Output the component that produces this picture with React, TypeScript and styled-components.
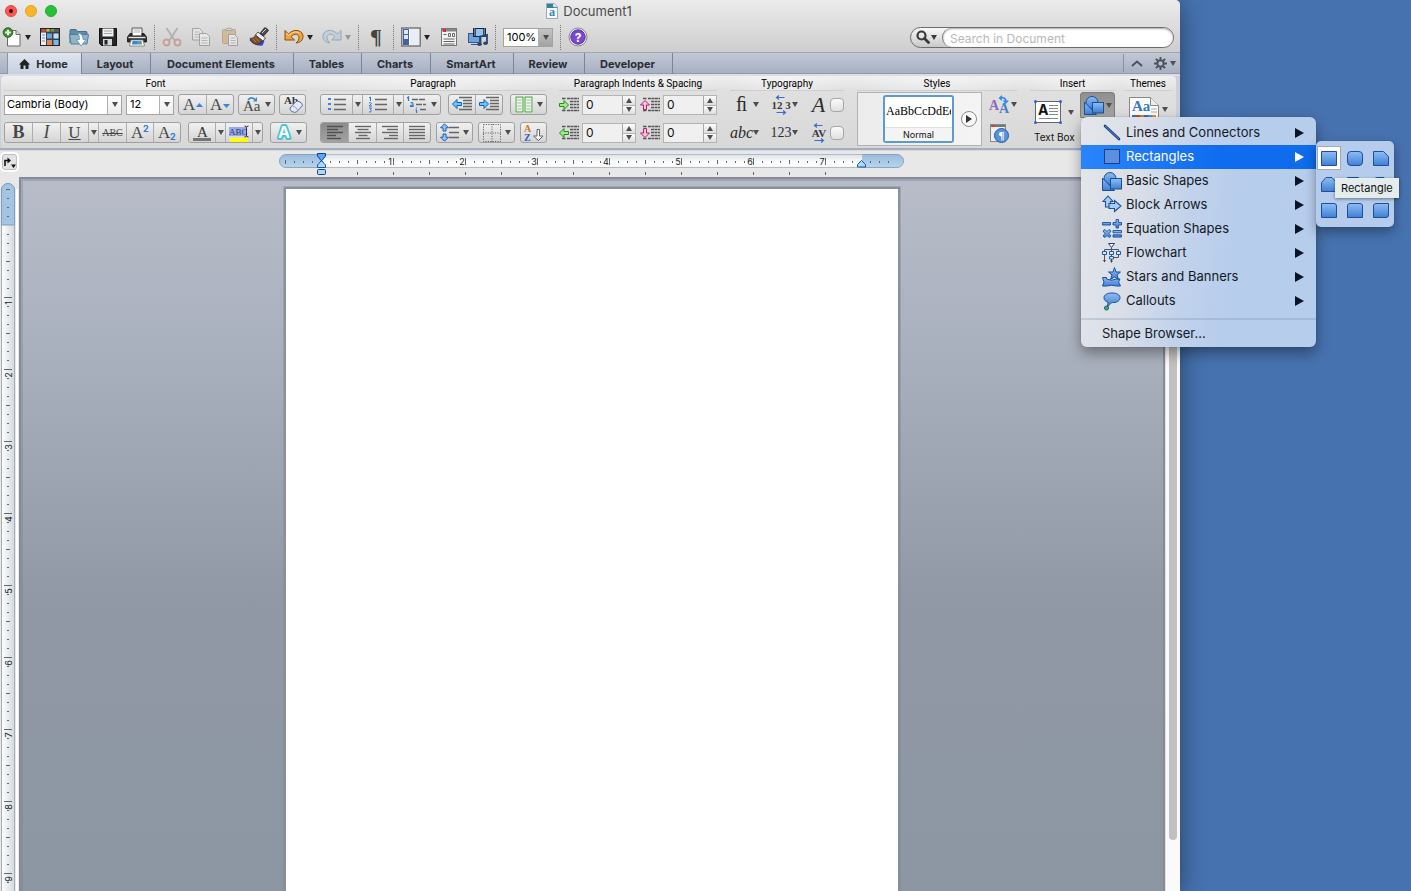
import React from "react";
import styled, { createGlobalStyle, css } from "styled-components";

const ui = `Inter, "Liberation Sans", sans-serif`;
const serif = `"Liberation Serif", serif`;

const GlobalStyle = createGlobalStyle`
  *, *::before, *::after { box-sizing: border-box; }
  body { margin: 0; background: #4672af; font-family: ${ui}; color: #111; overflow: hidden; }
  button, input, select { font: inherit; color: inherit; margin: 0; }
  button { padding: 0; border: 0; background: none; }
  svg { display: block; flex: none; }
`;

/* ---------- window frame ---------- */

const Desktop = styled.div`
  height: 100vh;
  padding-right: 231px;
`;
const Window = styled.main`
  height: 100%;
  display: flex;
  flex-direction: column;
  background: #e8e8e8;
  box-shadow: 0 4px 24px rgba(0, 0, 0, 0.45);
  border-radius: 0 5px 0 0;
`;
const Chrome = styled.header`
  background: linear-gradient(#ebebeb, #cecece);
  border-radius: 0 5px 0 0;
  border-bottom: 1px solid #a2a6ae;
`;
const TitleBar = styled.div`
  height: 22px;
  display: grid;
  grid-template-columns: 1fr auto 1fr;
  align-items: center;
`;
const Lights = styled.div`
  display: flex;
  gap: 8px;
  padding-left: 5px;
`;
const Light = styled.button<{ $c: string; $b: string }>`
  width: 12px;
  height: 12px;
  border-radius: 50%;
  background: ${(p) => p.$c};
  border: 1px solid ${(p) => p.$b};
  display: grid;
  place-items: center;
`;
const LightDot = styled.i`
  width: 4px;
  height: 4px;
  border-radius: 50%;
  background: #4d0000;
`;
const DocTitle = styled.h1`
  margin: 0 2px 0 0;
  display: flex;
  align-items: center;
  gap: 5px;
  font-size: 13px;
  line-height: 22px;
  font-weight: 400;
  color: #4b4b4b;
`;

/* ---------- standard toolbar ---------- */

const Toolbar = styled.div`
  height: 30px;
  display: flex;
  align-items: center;
  padding: 0 6px 0 2px;
`;
const ToolGroup = styled.div`
  display: flex;
  align-items: center;
  gap: 9px;
`;
const Split = styled.div`
  display: flex;
  align-items: center;
`;
const ToolButton = styled.button<{ $dim?: boolean }>`
  width: 20px;
  height: 22px;
  display: grid;
  place-items: center;
  opacity: ${(p) => (p.$dim ? 0.4 : 1)};
`;
const CaretButton = styled.button<{ $dim?: boolean }>`
  width: 9px;
  height: 22px;
  display: grid;
  place-items: center end;
  opacity: ${(p) => (p.$dim ? 0.35 : 1)};
`;
const ToolSep = styled.i`
  height: 25px;
  border-left: 1px dotted #777;
  margin: 0 7px;
`;
const Pilcrow = styled.span`
  font: 700 22px/20px ${serif};
  color: #444;
`;
const SearchBox = styled.div`
  margin-left: auto;
  width: 264px;
  height: 21px;
  display: flex;
  border: 1px solid #6d6d6d;
  border-radius: 11px;
  background: linear-gradient(#f8f8f8, #c9c9c9);
`;
const SearchMode = styled.button`
  width: 31px;
  display: flex;
  align-items: center;
  justify-content: center;
  gap: 1px;
`;
const SearchInput = styled.input`
  flex: 1;
  min-width: 0;
  border: 0;
  border-left: 1px solid #777;
  border-radius: 10px;
  padding: 2px 7px 0;
  background: #fff;
  box-shadow: inset 0 1px 2px rgba(0, 0, 0, 0.35);
  font-size: 12px;
  &::placeholder { color: #b9b9b9; opacity: 1; }
`;

/* ---------- ribbon tabs ---------- */

const TabBar = styled.nav`
  height: 23px;
  flex: none;
  display: flex;
  align-items: stretch;
  padding-left: 7px;
  background: linear-gradient(#c3c8d4, #a9b1c2 19px, #a9b1c2 20px, #8f99ab 20px, #8f99ab 21px, #d9dfe9 21px);
`;
const Tab = styled.button<{ $w: number; $on?: boolean }>`
  width: ${(p) => p.$w}px;
  height: 21px;
  display: flex;
  align-items: center;
  justify-content: center;
  gap: 6px;
  padding-right: 2px;
  font-size: 11px;
  font-weight: 700;
  color: #2a2d33;
  border-right: 1px solid #7d8594;
  ${(p) =>
    p.$on &&
    css`
      background: linear-gradient(#dfe4ee, #c8d0df);
      border-left: 1px solid #8d94a2;
    `}
`;
const TabTools = styled.div`
  margin-left: auto;
  height: 18px;
  margin-top: 1px;
  display: flex;
  align-items: center;
  border-left: 1px solid #8a91a0;
  padding: 0 4px 0 7px;
  button { display: flex; align-items: center; }
  button + button { margin-left: 11px; gap: 3px; }
`;

/* ---------- ribbon ---------- */

const RibbonShell = styled.div`
  flex: none;
  background: #c9d0dc;
  border-bottom: 2px solid #a4aebd;
  box-shadow: 0 1px 0 #d5dae2;
`;
const Ribbon = styled.section`
  height: 72px;
  margin: 0 4px 0 1px;
  display: flex;
  padding-top: 1px;
  background: linear-gradient(#f0f0f0, #e0e0e0 14px, #d8d8d8);
  border-radius: 4px;
`;
const Group = styled.section<{ $w?: number; $start?: number; $end?: number }>`
  ${(p) => (p.$w ? `width: ${p.$w}px; flex: none;` : "flex: 1; min-width: 0;")}
  display: flex;
  flex-direction: column;
  padding: 0 ${(p) => p.$end ?? 8}px 0 ${(p) => p.$start ?? 5}px;
  & + & { position: relative; }
  & + &::before {
    content: "";
    position: absolute;
    left: 0;
    top: 4px;
    bottom: 5px;
    border-left: 1px dotted #7c7c7c;
  }
`;
const GroupTitle = styled.h2`
  margin: 0 0 3px;
  height: 14px;
  font-family: Roboto, ${ui};
  font-size: 10px;
  line-height: 14px;
  font-weight: 400;
  text-align: center;
  color: #000;
  border-bottom: 1px solid #cfcfcf;
  background: linear-gradient(90deg, transparent, rgba(255, 255, 255, 0.35), transparent);
  white-space: nowrap;
`;
const Row = styled.div<{ $gap?: number }>`
  height: 21px;
  display: flex;
  align-items: center;
  gap: ${(p) => p.$gap ?? 4}px;
  & + & { margin-top: 7px; }
`;
const Segment = styled.div`
  display: flex;
  height: 21px;
  border: 1px solid #a0a0a0;
  border-radius: 3px;
  background: linear-gradient(#f1f1f1, #d4d4d4);
`;
const SegButton = styled.button<{ $w: number; $on?: boolean }>`
  width: ${(p) => p.$w}px;
  display: flex;
  align-items: center;
  justify-content: center;
  gap: 4px;
  & + & { border-left: 1px solid #adadad; }
  ${(p) => p.$on && "background: linear-gradient(#8b8b8b, #a2a2a2); border-radius: 2px 0 0 2px;"}
`;
const Glyph = styled.span<{ $i?: boolean; $u?: boolean; $s?: number; $strike?: boolean; $b?: boolean }>`
  font-family: ${serif};
  font-size: ${(p) => p.$s ?? 18}px;
  line-height: 19px;
  font-weight: ${(p) => (p.$b ? 700 : 400)};
  font-style: ${(p) => (p.$i ? "italic" : "normal")};
  text-decoration: ${(p) => (p.$u ? "underline" : p.$strike ? "line-through" : "none")};
  color: #484848;
`;
const Combo = styled.div<{ $w: number; $grey?: boolean }>`
  width: ${(p) => p.$w}px;
  height: ${(p) => (p.$grey ? 19 : 20)}px;
  display: grid;
  border: 1px solid #a3a3a3;
  background: #fff;
  > * { grid-area: 1 / 1; }
`;
const ComboSelect = styled.select<{ $pad: number }>`
  appearance: none;
  width: 100%;
  border: 0;
  background: transparent;
  padding: 0 0 1px ${(p) => p.$pad}px;
  font-size: 11px;
  color: #000;
`;
const ComboArrow = styled.i<{ $grey?: boolean }>`
  justify-self: end;
  width: 14px;
  display: grid;
  place-items: center;
  pointer-events: none;
  border-left: 1px solid #b0b0b0;
  background: ${(p) => (p.$grey ? "linear-gradient(#c4c4c4, #a2a2a2)" : "linear-gradient(#fff, #ececec)")};
`;
const Field = styled.div`
  display: flex;
  align-items: center;
  gap: 2px;
`;
const Spinner = styled.div`
  width: 54px;
  height: 20px;
  display: grid;
  grid-template: 1fr 1fr / 1fr 13px;
  border: 1px solid #b4b4b4;
  background: #f0f0f0;
  input {
    grid-row: 1 / 3;
    width: 100%;
    min-width: 0;
    border: 0;
    background: transparent;
    padding: 0 3px 1px;
    font-size: 12px;
  }
  button {
    display: grid;
    place-items: center;
    border-left: 1px solid #a8a8a8;
    background: linear-gradient(#fdfdfd, #dedede);
  }
  button + button { border-top: 1px solid #b4b4b4; }
`;
const TypoRow = styled.div`
  height: 21px;
  display: grid;
  grid-template-columns: 23px 17px 22px 16px 21px 15px;
  align-items: center;
  justify-items: center;
  > svg { justify-self: start; }
  & + & { margin-top: 7px; }
`;
const TypoButton = styled.button<{ $s: number; $i?: boolean }>`
  font: ${(p) => (p.$i ? "italic" : "normal")} ${(p) => p.$s}px/19px ${serif};
  color: #2c2c2c;
`;
const Check = styled.input`
  appearance: none;
  width: 14px;
  height: 14px;
  border: 1px solid #a6a6a6;
  border-radius: 4px;
  background: linear-gradient(#fafafa, #e0e0e0);
`;
const StyleArea = styled.div`
  display: flex;
  gap: 7px;
`;
const Gallery = styled.div`
  width: 125px;
  height: 54px;
  margin-top: -2px;
  display: flex;
  align-items: center;
  justify-content: flex-end;
  gap: 7px;
  padding-right: 4px;
  border: 1px solid #b2b2b2;
  background: linear-gradient(90deg, #ececec, #f4f4f4);
`;
const StyleCard = styled.button`
  width: 71px;
  height: 48px;
  display: flex;
  flex-direction: column;
  border: 2px solid #5b9bd0;
  border-radius: 3px;
  background: #fff;
`;
const Sample = styled.span`
  width: 66px;
  height: 30px;
  padding-left: 1px;
  overflow: hidden;
  font: 12px/29px ${serif};
  white-space: nowrap;
  color: #000;
`;
const SampleName = styled.span`
  width: 100%;
  height: 14px;
  border-top: 1px solid #e2e2e2;
  background: #f4f4f4;
  font-size: 9px;
  line-height: 13px;
`;
const RoundButton = styled.button`
  width: 16px;
  height: 16px;
  border: 1px solid #8a8a8a;
  border-radius: 50%;
  background: #fafafa;
  display: grid;
  place-items: center;
`;
const StyleTools = styled.div`
  display: flex;
  flex-direction: column;
  gap: 7px;
  button { height: 21px; display: flex; align-items: center; }
`;
const InsertArea = styled.div`
  display: flex;
  justify-content: space-between;
  margin-top: -2px;
  padding-left: 4px;
`;
const BigButton = styled.button`
  display: flex;
  flex-direction: column;
  font-size: 10px;
  line-height: 14px;
  white-space: nowrap;
  text-align: left;
`;
const BigIcon = styled.span`
  display: flex;
  align-items: center;
  gap: 6px;
  padding: 8px 0 6px;
`;
const ShapesAnchor = styled.div`
  position: relative;
  z-index: 5;
`;
const ShapesButton = styled.button`
  width: 35px;
  height: 26px;
  display: flex;
  align-items: center;
  justify-content: center;
  gap: 2px;
  border: 1px solid #7d7d7d;
  border-radius: 3px 3px 0 0;
  background: linear-gradient(#8f8f8f, #a6a6a6);
`;
const ThemeButton = styled.button`
  display: flex;
  align-items: center;
  gap: 3px;
  padding: 3px 0 0 5px;
`;

/* ---------- menu ---------- */

const Menu = styled.ul`
  position: absolute;
  top: 25px;
  left: 1px;
  width: 235px;
  margin: 0;
  padding: 4px 0 1px;
  list-style: none;
  border-radius: 6px;
  background: linear-gradient(97deg, #e4e6ea 0%, #d9dee8 25%, #c1d2ec 46%, #b7cdec 65%, #b7cdec);
  box-shadow: 0 0 1px rgba(0, 0, 0, 0.4), 0 6px 14px rgba(0, 0, 0, 0.38);
`;
const MenuItem = styled.li<{ $rule?: boolean }>`
  position: relative;
  ${(p) => p.$rule && "margin-top: 5px; padding-top: 2px; border-top: 2px solid rgba(120, 140, 170, 0.28);"}
`;
const MenuButton = styled.button<{ $on?: boolean }>`
  width: 100%;
  height: 24px;
  display: flex;
  align-items: center;
  gap: 4px;
  padding: 0 12px 0 21px;
  font-size: 13px;
  color: ${(p) => (p.$on ? "#fff" : "#141a26")};
  background: ${(p) => (p.$on ? "linear-gradient(90deg, #2a84fb, #0f6cee 60%, #0d6bec)" : "none")};
`;
const MenuLabel = styled.span`
  flex: 1;
  text-align: left;
  padding-bottom: 2px;
`;
const ShapeGrid = styled.div`
  position: absolute;
  left: 100%;
  top: -4px;
  width: 78px;
  padding: 4px 0;
  display: grid;
  grid-template-columns: repeat(3, 26px);
  grid-auto-rows: 26px;
  place-items: center;
  border-radius: 5px;
  background: #b5ccec;
  box-shadow: 0 0 1px rgba(0, 0, 0, 0.4), 0 5px 12px rgba(0, 0, 0, 0.35);
`;
const ShapeCell = styled.button<{ $on?: boolean }>`
  width: 24px;
  height: 24px;
  display: grid;
  place-items: center;
  ${(p) => p.$on && "background: #fff; border: 1px solid #a9a9a9;"}
`;
const Tooltip = styled.span`
  position: absolute;
  left: 19px;
  top: 37px;
  padding: 0 6px;
  font-size: 11px;
  line-height: 20px;
  color: #111;
  background: #e4ecec;
  box-shadow: 0 1px 3px rgba(0, 0, 0, 0.45);
`;

/* ---------- document area ---------- */

const RulerRow = styled.div`
  flex: none;
  height: 27px;
  display: flex;
  padding: 2px 16px 0 0;
`;
const TabStop = styled.button`
  width: 19px;
  height: 20px;
  border: 2px solid #fff;
  border-radius: 5px;
  background: #e3e3e3;
  box-shadow: inset 0 0 0 1px #c0c0c0;
  display: grid;
  place-items: center;
`;
const RulerCenter = styled.div`
  flex: 1;
  display: flex;
  justify-content: center;
`;
const Body = styled.div`
  flex: 1;
  min-height: 0;
  display: flex;
  overflow: hidden;
`;
const SideRuler = styled.div`
  width: 19px;
  padding-top: 5px;
  overflow: hidden;
`;
const Workspace = styled.div`
  flex: 1;
  padding-top: 8px;
  overflow: hidden;
  background: linear-gradient(#b8bcc9, #a9b0bd 25%, #8f98a4 60%, #8d97a3);
  border: solid #868b98;
  border-width: 2px 2px 0;
  box-shadow: inset 2px 2px 0 rgba(120, 126, 140, 0.35);
`;
const Page = styled.article`
  width: 616px;
  height: 796px;
  margin: 0 auto;
  background: #fff;
  border: 2px solid #8b909d;
  border-bottom: 0;
  box-shadow: 0 0 0 1px rgba(130, 136, 150, 0.4);
`;
const Scrollbar = styled.div`
  width: 15px;
  background: #fafafa;
  border-left: 1px solid #e2e2e2;
  padding: 3px 3px 51px;
  display: flex;
`;
const Thumb = styled.div`
  flex: 1;
  border-radius: 4px;
  background: #c1c1c1;
`;

/* ---------- drawings ---------- */

const Caret = ({ c = "#4d4d4d", up }: { c?: string; up?: boolean }) => (
  <svg width="6" height="5" viewBox="0 0 6 5" aria-hidden="true">
    <path d={up ? "M0 5h6L3 0z" : "M0 0h6L3 5z"} fill={c} />
  </svg>
);

const Svg = ({ w = 20, h = 20, children }: { w?: number; h?: number; children: React.ReactNode }) => (
  <svg width={w} height={h} viewBox={`0 0 ${w} ${h}`} aria-hidden="true">
    {children}
  </svg>
);

const DefsSvg = styled.svg`
  position: absolute;
  width: 0;
  height: 0;
`;
const BlueDefs = () => (
  <DefsSvg aria-hidden="true">
    <defs>
      <linearGradient id="blue" x1="0" y1="0" x2="0" y2="1">
        <stop offset="0" stopColor="#8fbdf5" />
        <stop offset="1" stopColor="#3e7fd3" />
      </linearGradient>
      <linearGradient id="trackH" x1="0" y1="0" x2="0" y2="1">
        <stop offset="0" stopColor="#d9dee4" />
        <stop offset=".6" stopColor="#fff" />
        <stop offset="1" stopColor="#f4f6f8" />
      </linearGradient>
      <linearGradient id="trackV">
        <stop offset="0" stopColor="#fff" />
        <stop offset="1" stopColor="#d3d9df" />
      </linearGradient>
      <linearGradient id="marginH" x1="0" y1="0" x2="0" y2="1">
        <stop offset="0" stopColor="#9dbbd9" />
        <stop offset="1" stopColor="#b5d5f1" />
      </linearGradient>
    </defs>
  </DefsSvg>
);

const NewDoc = () => (
  <Svg>
    <path d="M5.500 3.500h8.500l4 4v11.500H5.500z" fill="#fff" stroke="#6a6a6a" />
    <path d="M14 3.500v4h4" fill="#ddd" stroke="#6a6a6a" />
    <circle cx="6" cy="5.500" r="4.800" fill="#3c8f2c" stroke="#25691a" />
    <path d="M6 2.700v5.600M3.200 5.500h5.600" stroke="#fff" strokeWidth="2" />
  </Svg>
);
const GalleryIcon = () => (
  <Svg>
    <rect x=".5" y="1.500" width="19" height="17" fill="#3d4248" stroke="#222" />
    <rect x="1" y="2" width="18" height="3" fill="#5a5a5a" />
    <path d="M2 2h3v2.500H2z" fill="#e34234" />
    <path d="M6.500 2h3v2.500h-3z" fill="#e9b13a" />
    <path d="M11 2h3v2.500h-3z" fill="#57a64a" />
    <path d="M1 5.500h5v12.500H1z" fill="#eceff3" />
    <path d="M2 8h3M2 11h3M2 14h3" stroke="#6b8fb5" />
    <rect x="7" y="6.500" width="5" height="5" fill="#5aa7e8" />
    <rect x="13.500" y="6.500" width="5" height="5" fill="#bfe0fa" />
    <rect x="7" y="13" width="5" height="5" fill="#e8854a" />
    <rect x="13.500" y="13" width="5" height="5" fill="#7cb8ee" />
  </Svg>
);
const OpenIcon = () => (
  <Svg>
    <path d="M1 16V3.500q0-1 1-1h5l1.500 2H17q1 0 1 1V8" fill="#5e8cab" stroke="#466f8b" />
    <path d="M.5 7.500h19L18 17H2z" fill="#8db4cc" stroke="#51809d" />
    <path d="M8.500 6c4 0 5.500 3 5.500 6.500h3L12 19l-4.500-6.500h3c0-3-.5-5-2-6.500z" fill="#fff" stroke="#6b8798" strokeWidth=".7" />
  </Svg>
);
const SaveIcon = () => (
  <Svg>
    <path d="M1.500 1.500h17v17h-15l-2-2z" fill="#26282c" stroke="#111" />
    <rect x="4.500" y="1.500" width="11" height="8" fill="#f2f2f2" />
    <path d="M6 4h8M6 6.500h8" stroke="#9aa" />
    <rect x="5" y="12" width="9" height="6.500" fill="#d5d8dc" />
    <rect x="6.500" y="13" width="3" height="4.500" fill="#222" />
  </Svg>
);
const PrintIcon = () => (
  <Svg>
    <path d="M5 8V1h10v7" fill="#fff" stroke="#555" />
    <path d="M6.500 3h7M6.500 5h7" stroke="#999" strokeWidth=".8" />
    <path d="M3 6.500h2V9h10V6.500h2l2.500 3.500v5h-19v-5z" fill="#2e2e2e" stroke="#111" strokeWidth=".8" />
    <path d="M1.500 10.500h17" stroke="#e8e8e8" strokeWidth="1.400" />
    <path d="M4 13h12l1.500 6h-15z" fill="#fff" stroke="#777" strokeWidth=".8" />
    <path d="M5.500 14h4.500v3.500H5z" fill="#3e82d0" />
    <path d="M10 14h4.500l.5 3.500h-5z" fill="#4fa0a8" />
  </Svg>
);
const CutIcon = () => (
  <Svg>
    <path d="M4.500 1L13 14M15.500 1L7 14" stroke="#777" strokeWidth="1.800" />
    <circle cx="4.500" cy="15.500" r="3" fill="none" stroke="#b5563c" strokeWidth="1.800" />
    <circle cx="15.500" cy="15.500" r="3" fill="none" stroke="#b5563c" strokeWidth="1.800" />
  </Svg>
);
const CopyIcon = () => (
  <Svg>
    <path d="M1.500 1.500h7l3 3V13h-10z" fill="#f4f4f4" stroke="#555" />
    <path d="M3.500 5h5M3.500 7.500h6M3.500 10h5" stroke="#888" />
    <path d="M8.500 6.500h7l3 3v9h-10z" fill="#fff" stroke="#555" />
    <path d="M10.500 11h6M10.500 13.500h6M10.500 16h6" stroke="#888" />
  </Svg>
);
const PasteIcon = () => (
  <Svg>
    <rect x="2.500" y="2.500" width="13" height="14" rx="1" fill="#c98f3c" stroke="#8b5c1c" />
    <path d="M6 3.500V2q3-2 6 0v1.500z" fill="#ddd" stroke="#555" />
    <path d="M8.500 7.500h6l3 3v8h-9z" fill="#fff" stroke="#555" />
    <path d="M10.500 11h5M10.500 13.500h5M10.500 16h5" stroke="#888" />
  </Svg>
);
const BrushIcon = () => (
  <Svg>
    <path d="M.5 13q4 6.500 13 5.500l2-4.500-9-4z" fill="#3249c9" />
    <path d="M1 11.500q4 .5 6-4l7 5.500q-2 3-5.500 4.500-6-1-7.500-6z" fill="#7a5027" stroke="#3b2510" strokeWidth=".7" />
    <path d="M4 12l3 3M6 10.500l4 4" stroke="#c08b4c" strokeWidth=".8" />
    <path d="M6.500 8l2.500-3 7.500 6-2.500 3z" fill="#f0f0f0" stroke="#333" strokeWidth=".8" />
    <path d="M11 6.500L15.500.800q2.500-.3 4 2.700l-5 5.500z" fill="#4a4a4a" stroke="#222" strokeWidth=".8" />
    <path d="M13 6l4-4" stroke="#ddd" />
  </Svg>
);
const UndoIcon = () => (
  <Svg>
    <path d="M1 3.500V13h9.500L7 9.700C10 6 15.500 6.500 15 11.500q-.3 2.500-3 4.500 6-.5 7-5.500C20 3.500 10.500.5 4.500 7z" fill="#f1a33e" stroke="#8a4d0d" strokeWidth="1" />
    <path d="M2.500 6L4.500 8.500C8 5 12 4 15.500 6" fill="none" stroke="#fcdca5" />
  </Svg>
);
const RedoIcon = () => (
  <Svg>
    <path d="M19 3.500V13H9.500L13 9.700C10 6 4.500 6.500 5 11.500q.3 2.500 3 4.500-6-.5-7-5.500C0 3.500 9.500.5 15.500 7z" fill="#9fc4dc" stroke="#2f6a90" strokeWidth="1" />
  </Svg>
);
const SidebarIcon = () => (
  <Svg>
    <rect x=".8" y="1" width="18.400" height="18" fill="#fff" stroke="#777" strokeWidth="1.500" />
    <rect x="2" y="2" width="6" height="16" fill="#3f62ab" />
    <rect x="3" y="3" width="4" height="4" fill="#dfe8fb" />
    <rect x="3" y="8" width="4" height="4" fill="#dfe8fb" />
    <rect x="9" y="2" width="9" height="16" fill="#e9edf5" />
  </Svg>
);
const ToolboxIcon = () => (
  <Svg>
    <rect x="2.500" y="1.500" width="15" height="17" fill="#f3f3f3" stroke="#777" />
    <path d="M3 2h14v2.500H3z" fill="#888" />
    <path d="M4 2h3v3H4z" fill="#d6342a" />
    <path d="M4.500 7.500h3M9.500 6.500h2v3h-2zM13.500 6.500h2v3h-2zM4.500 12h11M4.500 14.500h11M4.500 17h11" stroke="#666" fill="none" />
  </Svg>
);
const MediaIcon = () => (
  <Svg>
    <rect x=".5" y="6.500" width="11" height="9" fill="#6ea2e0" stroke="#33568d" />
    <path d="M3 17.500h8" stroke="#33568d" />
    <rect x="5.500" y="1.500" width="12" height="8" fill="#8bc7f4" stroke="#223" />
    <path d="M6.500 1v9M16.500 1v9" stroke="#223" strokeWidth="2.500" />
    <path d="M6.500 1.500v8M16.500 1.500v8" stroke="#ccd" strokeWidth="1" strokeDasharray="1 1" />
    <path d="M12.500 17V9.500l6.500-1.500V16" fill="none" stroke="#27466f" strokeWidth="1.800" />
    <ellipse cx="11.500" cy="17.300" rx="2.300" ry="1.800" fill="#27466f" />
    <ellipse cx="17.500" cy="16.300" rx="2.300" ry="1.800" fill="#27466f" />
  </Svg>
);
const HelpIcon = () => (
  <Svg>
    <circle cx="10" cy="10" r="9" fill="#f4f4f4" stroke="#888" />
    <circle cx="10" cy="10" r="7.200" fill="#7a48cf" stroke="#5a2eae" />
    <text x="10" y="14.500" textAnchor="middle" fontFamily="Inter, sans-serif" fontSize="12" fontWeight="700" fill="#fff">?</text>
  </Svg>
);
const SearchIcon = () => (
  <Svg w={14} h={14}>
    <circle cx="5.500" cy="5.500" r="4" fill="none" stroke="#3a3a3a" strokeWidth="2.200" />
    <path d="M8.500 8.500l4 4" stroke="#3a3a3a" strokeWidth="2.800" strokeLinecap="round" />
  </Svg>
);
const FileIcon = () => (
  <Svg w={12} h={16}>
    <path d="M.5.500H8L11.500 4v11.500H.5z" fill="#f8fbfd" stroke="#9ab" />
    <path d="M1 1h6v3h4v1H1z" fill="#2b84a8" />
    <path d="M8 .5V4h3.500z" fill="#fff" stroke="#9ab" strokeWidth=".6" />
    <text x="6" y="13" textAnchor="middle" fontFamily="Liberation Serif, serif" fontSize="12" fontWeight="700" fill="#2e86b5">a</text>
  </Svg>
);
const HomeIcon = () => (
  <Svg w={11} h={10}>
    <path d="M5.500 0L0 5.500h1.500V10h3V6.500h2V10h3V5.500H11z" fill="#222" />
  </Svg>
);
const ChevronUp = () => (
  <Svg w={12} h={7}>
    <path d="M1 6l5-4.500L11 6" fill="none" stroke="#4c515b" strokeWidth="1.800" />
  </Svg>
);
const GearIcon = () => (
  <Svg w={13} h={13}>
    <circle cx="6.500" cy="6.500" r="3.200" fill="none" stroke="#4c515b" strokeWidth="2" />
    <path d="M6.500 0v3M6.500 10v3M0 6.500h3M10 6.500h3M1.900 1.900l2.100 2.100M9 9l2.100 2.100M11.100 1.900L9 4M4 9l-2.100 2.100" stroke="#4c515b" strokeWidth="1.800" />
  </Svg>
);

type LetterProps = { x: number; y: number; s: number; c?: string; t: string; f?: string; b?: boolean };
const Letter = ({ x, y, s, c = "#484848", t, f = "Liberation Serif, serif", b }: LetterProps) => (
  <text x={x} y={y} fontSize={s} fill={c} fontFamily={f} fontWeight={b ? 700 : 400}>
    {t}
  </text>
);
const GrowFont = ({ down }: { down?: boolean }) => (
  <Svg w={20} h={19}>
    <Letter x={0} y={15} s={17} t="A" />
    <path d={down ? "M13 9h7l-3.500 4z" : "M13 12h7l-3.500-4z"} fill="#3d86d6" />
  </Svg>
);
const ChangeCase = () => (
  <Svg w={18} h={19}>
    <Letter x={0} y={16} s={15} t="Aa" />
    <path d="M5 5q3-4 7-.5" fill="none" stroke="#3d86d6" strokeWidth="1.800" />
    <path d="M10 6.500h4V2z" fill="#3d86d6" />
  </Svg>
);
const ClearFormat = () => (
  <Svg w={22} h={19}>
    <Letter x={2} y={9} s={11} t="Ab" b c="#333" />
    <path d="M8 13l6-6.500q1.500-1 4 .5t2.500 3.500l-6 6.500q-2 1-4.500-.5t-2-3.500z" fill="#e5eaf8" stroke="#5a6ba5" />
    <path d="M10.500 11q3.500.5 5 4" fill="none" stroke="#93a0cb" />
  </Svg>
);
const Script = ({ sub }: { sub?: boolean }) => (
  <Svg w={20} h={19}>
    <Letter x={1} y={15} s={17} t="A" />
    <Letter x={13} y={sub ? 17 : 9} s={9} t="2" c="#3279d0" f="Inter, sans-serif" b />
  </Svg>
);
const FontColor = () => (
  <Svg w={19} h={19}>
    <Letter x={4} y={14} s={15} t="A" c="#333" />
    <rect x="0" y="15" width="18" height="3" fill="#757575" />
  </Svg>
);
const Highlight = () => (
  <Svg w={21} h={19}>
    <rect x="0" y="4" width="18" height="9" fill="#98a8e8" />
    <Letter x={0} y={12} s={9} t="ABC" c="#2e3a68" />
    <path d="M15.500 3q2 0 2 1.500v8q0 1.500-2 1.500M19.500 3q-2 0-2 1.500v8q0 1.500 2 1.500" fill="none" stroke="#333" />
    <rect x="1" y="15" width="18" height="4" fill="#ff0" />
  </Svg>
);
const TextEffect = () => (
  <Svg w={16} h={19}>
    <text x="2" y="15" fontFamily="Inter, sans-serif" fontSize="16" fontWeight="700" fill="#fff" stroke="#3cc4d8" strokeWidth="3.500" strokeLinejoin="round" paintOrder="stroke">A</text>
  </Svg>
);
const line = "#666";
const blueInk = "#2f74cc";
const Bullets = () => (
  <Svg w={18} h={15}>
    <path d="M0 1h3v2H0zM0 6h3v2H0zM0 11h3v2H0z" fill="#3f83d3" />
    <path d="M6 2.500h12M6 7.500h12M6 12.500h12" stroke={line} strokeWidth="1.500" />
  </Svg>
);
const Numbers = () => (
  <Svg w={18} h={17}>
    <path d="M0 2l1.500-1v4M0 7q2.500-1 2.500.5L0 10h3M0 12h2.500L1.500 13.500q1.500.5 0 2.500H0" fill="none" stroke={blueInk} />
    <path d="M6 3.500h12M6 8.500h12M6 13.500h12" stroke={line} strokeWidth="1.500" />
  </Svg>
);
const Multilevel = () => (
  <Svg w={20} h={17}>
    <path d="M0 2l1.500-1v4M3.500 7q2.500-1 2.500 1v2.500H3.500q-.5-1.500 2-1.500M9.500 11.500v1M8.500 14h1v3" fill="none" stroke={blueInk} strokeWidth="1.200" />
    <path d="M5 3.500h14M9 8.500h10M13 13.500h6" stroke={line} strokeWidth="1.500" strokeDasharray="6 1" />
  </Svg>
);
const Arrow = ({ x = 0, y = 0, r = 0, fill = "#6cc3f7", rim = "#0e62b4" }: { x?: number; y?: number; r?: number; fill?: string; rim?: string }) => (
  <path d="M-4.500 -1.500H0V-4.500L4.500 0L0 4.500V1.500H-4.500z" fill={fill} stroke={rim} strokeWidth="1" transform={`translate(${x} ${y}) rotate(${r})`} />
);
const Indent = ({ right }: { right?: boolean }) => (
  <Svg w={21} h={17}>
    <path d="M7 1.500h13M11 4.500h9M11 7.500h9M11 10.500h9M7 13.500h13" stroke={line} strokeWidth="1.400" />
    <Arrow x={5} y={8} r={right ? 0 : 180} />
  </Svg>
);
const Columns = () => (
  <Svg w={18} h={17}>
    <rect x="0" y="0" width="18" height="17" fill="#fff" />
    <rect x="1" y="1" width="7" height="15" fill="#eaf6e8" stroke="#3c9a35" />
    <rect x="10" y="1" width="7" height="15" fill="#eaf6e8" stroke="#3c9a35" />
    <path d="M2.500 4h4M2.500 7h4M2.500 10h4M2.500 13h4M11.500 4h4M11.500 7h4M11.500 10h4M11.500 13h4" stroke="#a9b8a8" />
  </Svg>
);
const Align = ({ kind }: { kind: "l" | "c" | "r" | "j" }) => {
  const widths = kind === "j" ? [16, 16, 16, 16, 16] : [16, 11, 16, 9, 14];
  return (
    <Svg w={16} h={15}>
      {widths.map((w, i) => {
        const x = kind === "l" || kind === "j" ? 0 : kind === "r" ? 16 - w : (16 - w) / 2;
        return <path key={i} d={`M${x} ${1.5 + i * 3}h${w}`} stroke={kind === "l" ? "#4f4f4f" : line} strokeWidth="1.400" />;
      })}
    </Svg>
  );
};
const LineSpacing = () => (
  <Svg w={19} h={19}>
    <path d="M4.500.800l4 4H6V8H3V4.800H.5z" fill="#8cc6f5" stroke="#1c5fb5" />
    <path d="M4.500 18.200l4-4H6V11H3v3.200H.5z" fill="#8cc6f5" stroke="#1c5fb5" />
    <path d="M9 4.500h10M9 9.500h10M9 14.500h10" stroke={line} strokeWidth="1.500" />
  </Svg>
);
const Borders = () => (
  <Svg w={18} h={18}>
    <path d="M.5.500h17v17H.5zM9 0v18M0 9h18" fill="none" stroke="#555" strokeDasharray="1 1.400" />
  </Svg>
);
const SortIcon = () => (
  <Svg w={21} h={19}>
    <Letter x={1} y={9} s={10} t="A" c="#c9781b" b />
    <Letter x={1} y={18} s={10} t="Z" c="#2f5fb8" b />
    <path d="M14 6.500h2.500v6.500h3.500L15.500 17.500 10.500 13h3.500z" fill="#fff" stroke="#666" />
  </Svg>
);
type FieldKind = "left" | "right" | "before" | "after";
const IndentField = ({ kind }: { kind: FieldKind }) => {
  const pink = kind === "before" || kind === "after";
  return (
    <Svg w={21} h={16}>
      <path d="M8 1.500h12M11 4.500h9M11 7.500h9M11 10.500h9M8 13.500h12M3 1.500h4M3 13.500h4" stroke="#555" strokeWidth="1.300" strokeDasharray="3 .5" />
      <Arrow x={5} y={8} r={{ left: 0, right: 180, before: -90, after: 90 }[kind]} fill={pink ? "#f9c3e0" : "#9dee84"} rim={pink ? "#b3216d" : "#1f8f1a"} />
    </Svg>
  );
};
const NumSpacing = ({ t }: { t: string }) => (
  <Svg w={20} h={20}>
    <path d="M5.500 2.500h8M8 .5l-2.500 2L8 4.500" fill="none" stroke="#3c6fc9" strokeWidth="1.200" />
    <text x="10" y="14" textAnchor="middle" fontFamily="Liberation Serif, serif" fontSize="11" fontWeight="700" fill="#3a3a3a">{t}</text>
    <path d="M5.500 17.500h9M12 15.500l2.500 2-2.500 2" fill="none" stroke="#3c6fc9" strokeWidth="1.200" />
  </Svg>
);
const StylesIcon = () => (
  <Svg w={22} h={20}>
    <Letter x={0} y={15} s={14} t="A" c="#9068bd" b />
    <Letter x={10} y={18} s={14} t="A" c="#4a80c8" b />
    <path d="M11 3q5-1.500 6 3" fill="none" stroke="#2f8fe6" strokeWidth="1.800" />
    <path d="M13.500 5.500H20L16.800 9zM13 0v6L9.500 3z" fill="#2f8fe6" />
  </Svg>
);
const StylePane = () => (
  <Svg w={20} h={20}>
    <rect x="1.500" y="1.500" width="15" height="17" fill="#eee" stroke="#888" />
    <path d="M2 2h14v2H2z" fill="#777" />
    <path d="M3 2h3v2H3z" fill="#e0402c" />
    <circle cx="12.500" cy="12.500" r="7" fill="#5793dd" stroke="#2c5ca5" />
    <text x="12.500" y="16" textAnchor="middle" fontFamily="Liberation Serif, serif" fontSize="11" fontWeight="700" fill="#fff">¶</text>
  </Svg>
);
const TextBoxIcon = () => (
  <Svg w={28} h={24}>
    <rect x="1.500" y="1.500" width="25" height="21" fill="#fff" stroke="#666" />
    <Letter x={4} y={15} s={14} t="A" c="#111" f="Inter, sans-serif" b />
    <path d="M15 5.500h9M15 8.500h9M15 11.500h9M15 14.500h9M5 18.500h19" stroke="#888" strokeWidth="1.200" />
    {[[1.5, 1.5], [26.5, 1.5], [1.5, 22.5], [26.5, 22.5]].map(([x, y]) => (
      <circle key={`${x}-${y}`} cx={x} cy={y} r="1.500" fill="#2f5fe0" />
    ))}
  </Svg>
);
const Shapes = () => (
  <Svg w={20} h={19}>
    <circle cx="8" cy="6.500" r="6" fill="url(#blue)" stroke="#1c4f94" />
    <path d="M.5 6v12.500h12z" fill="url(#blue)" stroke="#1c4f94" />
    <rect x="8.500" y="6.500" width="11" height="10.500" fill="url(#blue)" stroke="#1c4f94" />
  </Svg>
);
const ThemesIcon = () => (
  <Svg w={30} h={24}>
    <path d="M.5.500h21l8 8v15H.5z" fill="#fff" stroke="#888" />
    <path d="M21.500.5v8h8" fill="#eee" stroke="#888" />
    <Letter x={3} y={14} s={15} t="Aa" c="#3a78c4" b />
    <path d="M22 12h6M22 15h6" stroke="#aaa" />
    {["#3a78c4", "#cf4436", "#7fae3d", "#7b55a8", "#3ca1bd", "#ef8d35"].map((c, i) => (
      <rect key={c} x={3 + i * 4} y="18" width="4" height="4" fill={c} />
    ))}
  </Svg>
);
const MenuArrow = ({ c = "#0b1222" }) => (
  <Svg w={9} h={10}>
    <path d="M0 0v10l9-5z" fill={c} />
  </Svg>
);

const solid = { fill: "url(#blue)", stroke: "#1d4f9a" };
const LineIcon = () => (
  <Svg>
    <path d="M3 3l14 13" stroke="#173d7c" strokeWidth="2.600" strokeLinecap="round" />
    <path d="M3 3l14 13" stroke="#5c94dd" strokeWidth="1" />
  </Svg>
);
const RectIcon = () => (
  <Svg>
    <rect x="2.500" y="2.500" width="15" height="14" fill="#5b8fe0" stroke="#1b3f86" />
  </Svg>
);
const BlockArrows = () => (
  <Svg>
    <g fill="#a9cbf3" stroke="#1f5199" strokeWidth="1.100">
      <path d="M6 1l5 5.500H8.500V12h-5V6.500H1z" />
      <path d="M7 8.500h5.500v-3L19 11l-6.500 5.500v-3H7z" />
    </g>
  </Svg>
);
const Equations = () => (
  <Svg>
    <g {...solid} strokeWidth=".9">
      <path d="M.5 3.500h8v2.500h-8z" />
      <path d="M14 .5h2.500V3.500h3V6h-3v3H14V6h-3V3.500h3z" />
      <path d="M1 12l2-1.500 2 2 2-2L9 12l-2 2.500L9 17l-2 1.500-2-2-2 2L1 17l2-2.500z" />
      <path d="M11 11.500h8.500v2.300H11zM11 15.800h8.500v2.300H11z" />
    </g>
  </Svg>
);
const Flow = () => (
  <Svg>
    <path d="M6.500.500h6l-3 4z" fill="#fff" stroke="#2a3e74" />
    <path d="M9.500 4.500V18M2.500 8V6.500h14V8M2.500 12v6M16.500 12v2.500H12" fill="none" stroke="#555" />
    <path d="M.5 8.500h4v3h-4zM7.500 8.500h4v3h-4zM14.500 8.500h4v3h-4zM7.500 13.500h4v2.500h-4z" fill="#dbe8fa" stroke="#2458a5" />
    <path d="M1 17h3l-1.500 2.500zM8 17.500h3L9.500 20z" fill="#444" />
  </Svg>
);
const Stars = () => (
  <Svg>
    <path d="M.5 10.500h4v1.500q5 2.500 10 0H18l-1.500 3 2 4h-4q-5-1.500-10 0H.5l1.500-4z" {...solid} />
    <path d="M12.500.500l1.500 4.500h4.500L15 8l1.500 4.500-4-2.500-4 2.500L10 8 6.500 5H11z" {...solid} />
  </Svg>
);
const Callout = () => (
  <Svg>
    <path d="M10 2c5 0 8 2 8 4.800s-3 4.700-6 4.700c-2 0-3 0-6.500 4.500L6 11C3.500 10.500 2 9 2 6.800 2 4 5 2 10 2z" {...solid} />
    <circle cx="4.500" cy="17" r="2" fill="#35b38c" stroke="#12624a" />
  </Svg>
);

const ruleInk = "#666";
const HRuler = () => (
  <svg width="625" height="24" role="img" aria-label="Horizontal ruler">
    <rect x=".5" y="2.500" width="624" height="13" rx="6.500" fill="url(#marginH)" stroke="#8ba3bd" />
    <rect x="42" y="2" width="541" height="14" fill="url(#trackH)" />
    <path d="M42 2.500h541M42 15.500h541" stroke="#b4bbc3" />
    {Array.from({ length: 69 }, (_, i) => {
      const k = i - 4;
      const x = 42.5 + k * 9;
      if (k === 0 || k === 60 || x > 618) return null;
      const h = k % 8 === 0 ? 7 : k % 4 === 0 ? 4 : 2;
      return <path key={k} d={`M${x} ${10 - Math.ceil(h / 2)}v${h}`} stroke={ruleInk} />;
    })}
    {[1, 2, 3, 4, 5, 6, 7].map((n) => (
      <text key={n} x={39 + n * 72} y="13" textAnchor="middle" fontSize="9" fontFamily="Inter, sans-serif" fill="#222">
        {n}
      </text>
    ))}
    {Array.from({ length: 14 }, (_, i) => (
      <path key={i} d={`M${78.5 + i * 36} 20v3`} stroke={ruleInk} />
    ))}
    <path d="M38.500 1.500h8V4l-3.500 4.500h-1L38.500 4z" fill="#5aa5f0" stroke="#123f94" />
    <path d="M42 9h1l3.500 4v2.500h-8V13z" fill="#a5dcfb" stroke="#1a54ab" />
    <rect x="38.500" y="17.500" width="8" height="5" rx="1" fill="#a5dcfb" stroke="#1f3d72" />
    <path d="M582.500 8.500l4 4v2.500h-8v-2.500z" fill="#a5dcfb" stroke="#1a54ab" />
  </svg>
);
const VRuler = () => (
  <svg width="18" height="800" role="img" aria-label="Vertical ruler">
    <rect x="16" y="7" width="2" height="793" fill="#fff" />
    <path d="M1.500 800V8a6.500 6.500 0 0 1 13 0v792" fill="url(#trackV)" stroke="#a7adb5" />
    <path d="M1.500 43V8a6.500 6.500 0 0 1 13 0v35z" fill="#a3c4e3" stroke="#7c9dbd" />
    {Array.from({ length: 84 }, (_, i) => {
      const k = i - 4;
      const y = 43.5 + k * 9;
      if (k === 0) return null;
      const w = k % 8 === 0 ? 8 : k % 4 === 0 ? 4 : 2;
      return <path key={k} d={`M${8 - w / 2} ${y}h${w}`} stroke={ruleInk} />;
    })}
    {Array.from({ length: 9 }, (_, i) => (
      <text key={i} transform={`translate(12 ${49 + (i + 1) * 72}) rotate(-90)`} textAnchor="middle" fontSize="9" fontFamily="Inter, sans-serif" fill="#222">
        {i + 1}
      </text>
    ))}
  </svg>
);

/* ---------- composite controls ---------- */

const Tool = ({ label, dim, children }: { label: string; dim?: boolean; children: React.ReactNode }) => (
  <ToolButton aria-label={label} $dim={dim}>{children}</ToolButton>
);
const SplitTool = ({ label, dim, children }: { label: string; dim?: boolean; children: React.ReactNode }) => (
  <Split>
    <Tool label={label} dim={dim}>{children}</Tool>
    <CaretButton aria-label={`${label} options`} $dim={dim}><Caret c="#222" /></CaretButton>
  </Split>
);
const NumberField = ({ label, kind }: { label: string; kind: FieldKind }) => (
  <Field>
    <IndentField kind={kind} />
    <Spinner>
      <input aria-label={label} defaultValue="0" inputMode="numeric" />
      <button aria-label={`Increase ${label}`}><Caret up /></button>
      <button aria-label={`Decrease ${label}`}><Caret /></button>
    </Spinner>
  </Field>
);
const SegCaret = ({ label }: { label: string }) => (
  <SegButton $w={10} aria-label={label}><Caret /></SegButton>
);

const tabs: [string, number][] = [
  ["Layout", 69],
  ["Document Elements", 143],
  ["Tables", 68],
  ["Charts", 69],
  ["SmartArt", 83],
  ["Review", 71],
  ["Developer", 88],
];

const menuItems: [string, React.ReactNode][] = [
  ["Lines and Connectors", <LineIcon key="i" />],
  ["Rectangles", <RectIcon key="i" />],
  ["Basic Shapes", <Shapes key="i" />],
  ["Block Arrows", <BlockArrows key="i" />],
  ["Equation Shapes", <Equations key="i" />],
  ["Flowchart", <Flow key="i" />],
  ["Stars and Banners", <Stars key="i" />],
  ["Callouts", <Callout key="i" />],
];

const rectShapes: [string, string][] = [
  ["Rectangle", "M.5.500h15v14H.5z"],
  ["Rounded Rectangle", "M4 .5h8q3.500 0 3.500 3.500v7q0 3.500-3.500 3.500H4Q.5 14.500.5 11V4Q.5.500 4 .5z"],
  ["Snip Single Corner", "M.5.500h10l5 5v9H.5z"],
  ["Snip Same Side Corner", "M5 .5h6l4.500 5v9H.5v-9z"],
  ["Snip Diagonal Corner", "M.5.500h11l4 4v10h-11l-4-4z"],
  ["Snip and Round Corner", "M5 .5h6l4.500 5v9H.5V5Q.5.500 5 .5z"],
  ["Round Single Corner", "M.5.500H13q2.500 0 2.500 2.500v11.500H.5z"],
  ["Round Same Side Corner", "M3 .5h10q2.500 0 2.500 2.500v11.500H.5V3Q.5.500 3 .5z"],
  ["Round Diagonal Corner", "M3 .5h12.500V12q0 2.500-2.500 2.500H.5V3Q.5.500 3 .5z"],
];

const RectanglesPanel = () => (
  <ShapeGrid>
    {rectShapes.map(([name, d], i) => (
      <ShapeCell key={name} aria-label={name} $on={i === 0}>
        <Svg w={16} h={15}><path d={d} {...solid} /></Svg>
      </ShapeCell>
    ))}
    <Tooltip role="tooltip">Rectangle</Tooltip>
  </ShapeGrid>
);

const ShapesMenu = () => (
  <Menu>
    {menuItems.map(([name, icon]) => {
      const on = name === "Rectangles";
      return (
        <MenuItem key={name}>
          <MenuButton $on={on}>
            {icon}
            <MenuLabel>{name}</MenuLabel>
            <MenuArrow c={on ? "#fff" : undefined} />
          </MenuButton>
          {on && <RectanglesPanel />}
        </MenuItem>
      );
    })}
    <MenuItem $rule>
      <MenuButton><MenuLabel>Shape Browser...</MenuLabel></MenuButton>
    </MenuItem>
  </Menu>
);

export default function App() {
  return (
    <Desktop>
      <GlobalStyle />
      <BlueDefs />
      <Window>
        <Chrome>
          <TitleBar>
            <Lights>
              <Light $c="#fc5753" $b="#df4744" aria-label="Close"><LightDot /></Light>
              <Light $c="#fdb427" $b="#de9f34" aria-label="Minimize" />
              <Light $c="#27c138" $b="#27aa35" aria-label="Zoom" />
            </Lights>
            <DocTitle><FileIcon />Document1</DocTitle>
          </TitleBar>
          <Toolbar>
            <ToolGroup>
              <SplitTool label="New"><NewDoc /></SplitTool>
              <Tool label="Gallery"><GalleryIcon /></Tool>
              <Tool label="Open"><OpenIcon /></Tool>
              <Tool label="Save"><SaveIcon /></Tool>
              <Tool label="Print"><PrintIcon /></Tool>
            </ToolGroup>
            <ToolSep />
            <ToolGroup>
              <Tool label="Cut" dim><CutIcon /></Tool>
              <Tool label="Copy" dim><CopyIcon /></Tool>
              <Tool label="Paste" dim><PasteIcon /></Tool>
              <Tool label="Format"><BrushIcon /></Tool>
            </ToolGroup>
            <ToolSep />
            <ToolGroup>
              <SplitTool label="Undo"><UndoIcon /></SplitTool>
              <SplitTool label="Redo" dim><RedoIcon /></SplitTool>
            </ToolGroup>
            <ToolSep />
            <ToolGroup>
              <Tool label="Show formatting"><Pilcrow>¶</Pilcrow></Tool>
            </ToolGroup>
            <ToolSep />
            <ToolGroup>
              <SplitTool label="Sidebar"><SidebarIcon /></SplitTool>
              <Tool label="Toolbox"><ToolboxIcon /></Tool>
              <Tool label="Media"><MediaIcon /></Tool>
            </ToolGroup>
            <ToolSep />
            <Combo $w={50} $grey>
              <ComboSelect $pad={3} aria-label="Zoom level"><option>100%</option></ComboSelect>
              <ComboArrow $grey><Caret /></ComboArrow>
            </Combo>
            <ToolSep />
            <Tool label="Help"><HelpIcon /></Tool>
            <SearchBox>
              <SearchMode aria-label="Search options"><SearchIcon /><Caret c="#3a3a3a" /></SearchMode>
              <SearchInput placeholder="Search in Document" aria-label="Search in Document" />
            </SearchBox>
          </Toolbar>
        </Chrome>

        <TabBar>
          <Tab $w={75} $on><HomeIcon />Home</Tab>
          {tabs.map(([name, w]) => <Tab key={name} $w={w}>{name}</Tab>)}
          <TabTools>
            <button aria-label="Collapse ribbon"><ChevronUp /></button>
            <button aria-label="Ribbon settings"><GearIcon /><Caret c="#4c515b" /></button>
          </TabTools>
        </TabBar>

        <RibbonShell>
          <Ribbon>
            <Group $w={314} $start={3}>
              <GroupTitle>Font</GroupTitle>
              <Row>
                <Combo $w={118}>
                  <ComboSelect $pad={2} aria-label="Font name"><option>Cambria (Body)</option></ComboSelect>
                  <ComboArrow><Caret /></ComboArrow>
                </Combo>
                <Combo $w={48}>
                  <ComboSelect $pad={3} aria-label="Font size"><option>12</option></ComboSelect>
                  <ComboArrow><Caret /></ComboArrow>
                </Combo>
                <Segment>
                  <SegButton $w={27} aria-label="Grow font"><GrowFont /></SegButton>
                  <SegButton $w={27} aria-label="Shrink font"><GrowFont down /></SegButton>
                </Segment>
                <Segment><SegButton $w={35} aria-label="Change case"><ChangeCase /><Caret /></SegButton></Segment>
                <Segment><SegButton $w={25} aria-label="Clear formatting"><ClearFormat /></SegButton></Segment>
              </Row>
              <Row $gap={7}>
                <Segment>
                  <SegButton $w={27} aria-label="Bold"><Glyph $b>B</Glyph></SegButton>
                  <SegButton $w={28} aria-label="Italic"><Glyph $i>I</Glyph></SegButton>
                  <SegButton $w={28} aria-label="Underline"><Glyph $u $s={17}>U</Glyph></SegButton>
                  <SegCaret label="Underline style" />
                  <SegButton $w={28} aria-label="Strikethrough"><Glyph $strike $s={10}>ABC</Glyph></SegButton>
                  <SegButton $w={27} aria-label="Superscript"><Script /></SegButton>
                  <SegButton $w={27} aria-label="Subscript"><Script sub /></SegButton>
                </Segment>
                <Segment>
                  <SegButton $w={26} aria-label="Font color"><FontColor /></SegButton>
                  <SegCaret label="Font color options" />
                  <SegButton $w={27} aria-label="Highlight"><Highlight /></SegButton>
                  <SegCaret label="Highlight options" />
                </Segment>
                <Segment><SegButton $w={35} aria-label="Text effects"><TextEffect /><Caret /></SegButton></Segment>
              </Row>
            </Group>

            <Group $w={239}>
              <GroupTitle>Paragraph</GroupTitle>
              <Row $gap={7}>
                <Segment>
                  <SegButton $w={31} aria-label="Bullets"><Bullets /></SegButton>
                  <SegCaret label="Bullet options" />
                  <SegButton $w={31} aria-label="Numbering"><Numbers /></SegButton>
                  <SegCaret label="Numbering options" />
                  <SegButton $w={37} aria-label="Multilevel list"><Multilevel /><Caret /></SegButton>
                </Segment>
                <Segment>
                  <SegButton $w={26} aria-label="Decrease indent"><Indent /></SegButton>
                  <SegButton $w={27} aria-label="Increase indent"><Indent right /></SegButton>
                </Segment>
                <Segment><SegButton $w={35} aria-label="Columns"><Columns /><Caret /></SegButton></Segment>
              </Row>
              <Row $gap={5}>
                <Segment>
                  <SegButton $w={27} $on aria-label="Align left"><Align kind="l" /></SegButton>
                  <SegButton $w={28} aria-label="Align center"><Align kind="c" /></SegButton>
                  <SegButton $w={27} aria-label="Align right"><Align kind="r" /></SegButton>
                  <SegButton $w={27} aria-label="Justify"><Align kind="j" /></SegButton>
                </Segment>
                <Segment><SegButton $w={35} aria-label="Line spacing"><LineSpacing /><Caret /></SegButton></Segment>
                <Segment><SegButton $w={35} aria-label="Borders"><Borders /><Caret /></SegButton></Segment>
                <Segment><SegButton $w={25} aria-label="Sort"><SortIcon /></SegButton></Segment>
              </Row>
            </Group>

            <Group $w={171}>
              <GroupTitle>Paragraph Indents &amp; Spacing</GroupTitle>
              <Row>
                <NumberField label="left indent" kind="left" />
                <NumberField label="space before" kind="before" />
              </Row>
              <Row>
                <NumberField label="right indent" kind="right" />
                <NumberField label="space after" kind="after" />
              </Row>
            </Group>

            <Group $w={127}>
              <GroupTitle>Typography</GroupTitle>
              <TypoRow>
                <TypoButton $s={20} aria-label="Ligatures">ﬁ</TypoButton>
                <Caret />
                <TypoButton $s={12} aria-label="Number spacing"><NumSpacing t="12 3" /></TypoButton>
                <Caret />
                <TypoButton as="label" htmlFor="alternates" $s={22} $i>A</TypoButton>
                <Check type="checkbox" id="alternates" />
              </TypoRow>
              <TypoRow>
                <TypoButton $s={16} $i>abc</TypoButton>
                <Caret />
                <TypoButton $s={14}>123</TypoButton>
                <Caret />
                <TypoButton as="label" htmlFor="kerning" $s={12} aria-label="Kerning"><NumSpacing t="AV" /></TypoButton>
                <Check type="checkbox" id="kerning" />
              </TypoRow>
            </Group>

            <Group>
              <GroupTitle>Styles</GroupTitle>
              <StyleArea>
                <Gallery>
                  <StyleCard>
                    <Sample>AaBbCcDdEe</Sample>
                    <SampleName>Normal</SampleName>
                  </StyleCard>
                  <RoundButton aria-label="Next styles"><Svg w={6} h={8}><path d="M0 0v8l6-4z" fill="#333" /></Svg></RoundButton>
                </Gallery>
                <StyleTools>
                  <button aria-label="Change styles"><StylesIcon /><Caret /></button>
                  <button aria-label="Styles pane"><StylePane /></button>
                </StyleTools>
              </StyleArea>
            </Group>

            <Group $w={94} $end={4}>
              <GroupTitle>Insert</GroupTitle>
              <InsertArea>
                <BigButton>
                  <BigIcon><TextBoxIcon /><Caret /></BigIcon>
                  Text Box
                </BigButton>
                <ShapesAnchor>
                  <ShapesButton aria-label="Shapes"><Shapes /><Caret /></ShapesButton>
                  <ShapesMenu />
                </ShapesAnchor>
              </InsertArea>
            </Group>

            <Group $w={57} $end={4}>
              <GroupTitle>Themes</GroupTitle>
              <ThemeButton aria-label="Themes"><ThemesIcon /><Caret /></ThemeButton>
            </Group>
          </Ribbon>
        </RibbonShell>

        <RulerRow>
          <TabStop aria-label="Tab stop">
            <Svg w={13} h={11}>
              <path d="M2 9V3.500h4" fill="none" stroke="#111" strokeWidth="1.600" />
              <path d="M4.500.500v6L8 3.500zM8 7.500h5L10.500 11z" fill="#111" />
            </Svg>
          </TabStop>
          <RulerCenter><HRuler /></RulerCenter>
        </RulerRow>

        <Body>
          <SideRuler><VRuler /></SideRuler>
          <Workspace><Page /></Workspace>
          <Scrollbar><Thumb /></Scrollbar>
        </Body>
      </Window>
    </Desktop>
  );
}
